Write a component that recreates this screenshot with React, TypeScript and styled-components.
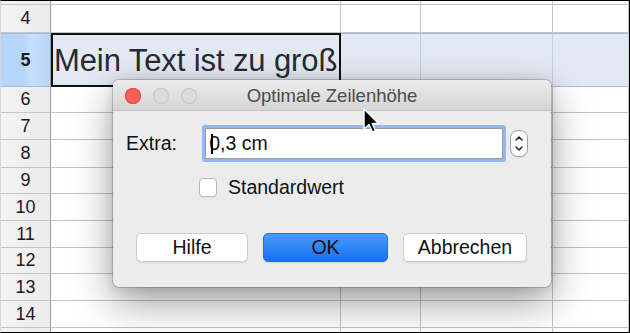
import React from 'react';
import styled, { createGlobalStyle, css } from 'styled-components';

const Global = createGlobalStyle`
  html, body { margin: 0; padding: 0; background: #fff; }
  body { font-family: "Liberation Sans", Arial, Helvetica, sans-serif; }
  * { box-sizing: border-box; }
`;

const Frame = styled.div`
  position: relative;
  width: 630px;
  height: 333px;
  overflow: hidden;
  border-top: 1px solid #000;
  border-right: 1px solid #000;
  border-bottom: 1px solid #000;
  border-left: 1px solid #d6d6d6;
  background: #fff;
`;

const Sheet = styled.div`
  display: flex;
  flex-direction: column;
`;

const Row = styled.div<{ $h: number; $sel?: boolean }>`
  display: grid;
  grid-template-columns: 50px 290px 80px 132px 1fr;
  height: ${(p) => p.$h}px;
  flex: none;
  ${(p) =>
    p.$sel &&
    css`
      background: #e3e9f2;
    `}
`;

const HeaderCell = styled.div<{ $sel?: boolean }>`
  display: flex;
  align-items: center;
  justify-content: center;
  font-size: 18px;
  color: #1a1a1a;
  background: linear-gradient(to right, #f3f3f3, #ececec);
  border-right: 1px solid #9d9d9d;
  border-bottom: 1px solid #c4c4c4;
  ${(p) =>
    p.$sel &&
    css`
      font-weight: bold;
      background: linear-gradient(to right, #b6d5fb 0%, #b6d5fb 45%, #c6defc 60%, #b9d7fb 100%);
      border-top: 1px solid #9fc0ea;
      border-bottom: 1px solid #9fc0ea;
    `}
`;

const Cell = styled.div<{ $sel?: boolean; $active?: boolean }>`
  border-right: 1px solid #c4c4c4;
  border-bottom: 1px solid #c4c4c4;
  display: flex;
  align-items: center;
  overflow: visible;
  white-space: nowrap;
  ${(p) =>
    p.$sel &&
    css`
      border-top: 1px solid #a3bde3;
      border-bottom: 1px solid #a3bde3;
      border-right-color: #c8d0db;
    `}
  ${(p) =>
    p.$active &&
    css`
      border: 2px solid #111;
      border-right-width: 2px;
      padding-left: 1px;
    `}
`;

const BigText = styled.span`
  font-size: 31px;
  color: #262b31;
  letter-spacing: -0.1px;
  margin-top: 2px;
`;

const Dialog = styled.div`
  position: absolute;
  left: 112px;
  top: 79px;
  width: 438px;
  height: 207px;
  border-radius: 6px;
  background: #ececec;
  box-shadow: 0 16px 40px rgba(0, 0, 0, 0.38), 0 0 12px rgba(0, 0, 0, 0.14), 0 0 0 1px rgba(0, 0, 0, 0.16);
  display: flex;
  flex-direction: column;
  overflow: hidden;
`;

const TitleBar = styled.div`
  position: relative;
  height: 31px;
  flex: none;
  display: flex;
  align-items: center;
  justify-content: center;
  background: linear-gradient(#ececec, #d4d4d4);
  border-bottom: 1px solid #c2c2c2;
`;

const Lights = styled.div`
  position: absolute;
  left: 12px;
  top: 8px;
  display: flex;
  gap: 12px;
`;

const Light = styled.span<{ $c: string; $b: string }>`
  width: 16px;
  height: 16px;
  border-radius: 50%;
  background: ${(p) => p.$c};
  box-shadow: inset 0 0 0 1px ${(p) => p.$b};
`;

const Title = styled.span`
  font-size: 18.5px;
  color: #4b4b4b;
  margin-top: 1px;
`;

const Body = styled.div`
  display: flex;
  flex-direction: column;
  padding: 14px 23px 0 13px;
`;

const FormRow = styled.div`
  display: flex;
  align-items: center;
  height: 37px;
`;

const Label = styled.span`
  width: 77px;
  font-size: 19.5px;
  color: #111;
`;

const Field = styled.div`
  position: relative;
  width: 301px;
  height: 31px;
  margin: 0 3px;
  background: #fff;
  border: 1px solid #9a9a9a;
  box-shadow: 0 0 0 3px #93b9ec;
  border-radius: 1px;
  display: flex;
  align-items: center;
  padding-left: 3px;
  font-size: 19.5px;
  color: #111;
`;

const Caret = styled.span`
  position: absolute;
  left: 5px;
  top: 5px;
  width: 2px;
  height: 20px;
  background: #000;
`;

const Stepper = styled.div`
  margin-left: 4px;
  width: 18px;
  height: 27px;
  border-radius: 8px;
  border: 1px solid #a2a2a2;
  background: #fff;
  box-shadow: 0 1px 1px rgba(0, 0, 0, 0.08);
  display: flex;
  align-items: center;
  justify-content: center;
`;

const CheckRow = styled.div`
  display: flex;
  align-items: center;
  margin-top: 16px;
  padding-left: 73px;
  height: 19px;
`;

const Box = styled.span`
  width: 18px;
  height: 19px;
  border-radius: 4px;
  background: #fff;
  border: 1px solid #b8b8b8;
  box-shadow: 0 1px 1px rgba(0, 0, 0, 0.06);
`;

const CheckLabel = styled.span`
  margin-left: 11px;
  font-size: 19.5px;
  color: #111;
`;

const Buttons = styled.div`
  display: flex;
  margin-top: 36px;
  padding-left: 10px;
  gap: 15px;
`;

const Button = styled.div<{ $w: number; $primary?: boolean }>`
  width: ${(p) => p.$w}px;
  height: 29px;
  border-radius: 5px;
  display: flex;
  align-items: center;
  justify-content: center;
  font-size: 19.5px;
  color: #111;
  background: #fff;
  border: 1px solid #cdcdcd;
  box-shadow: 0 1px 1px rgba(0, 0, 0, 0.1);
  ${(p) =>
    p.$primary &&
    css`
      background: linear-gradient(#4a9bfb, #1670f4);
      border: 1px solid #1f6fe0;
    `}
`;

const Pointer = styled.svg`
  position: absolute;
  left: 361px;
  top: 106px;
`;

const rowHeights = [26, 27, 28, 26, 27, 27, 26, 27, 27];

export default function App() {
  const rows: { n: string; h: number }[] = [
    { n: '', h: 4 },
    { n: '4', h: 28 },
  ];
  rowHeights.forEach((h, i) => rows.push({ n: String(6 + i), h }));

  return (
    <>
      <Global />
      <Frame>
        <Sheet>
          {rows.slice(0, 2).map((r) => (
            <Row key={'r' + r.n} $h={r.h}>
              <HeaderCell>{r.n}</HeaderCell>
              <Cell />
              <Cell />
              <Cell />
              <Cell />
            </Row>
          ))}
          <Row $h={54} $sel>
            <HeaderCell $sel>5</HeaderCell>
            <Cell $active>
              <BigText>Mein Text ist zu groß</BigText>
            </Cell>
            <Cell $sel />
            <Cell $sel />
            <Cell $sel />
          </Row>
          {rows.slice(2).map((r) => (
            <Row key={'r' + r.n} $h={r.h}>
              <HeaderCell>{r.n}</HeaderCell>
              <Cell />
              <Cell />
              <Cell />
              <Cell />
            </Row>
          ))}
          <Row $h={10}>
            <HeaderCell />
            <Cell />
            <Cell />
            <Cell />
            <Cell />
          </Row>
        </Sheet>

        <Dialog>
          <TitleBar>
            <Lights>
              <Light $c="#fd5f57" $b="#e2463f" />
              <Light $c="#dcdcdc" $b="#c6c6c6" />
              <Light $c="#dcdcdc" $b="#c6c6c6" />
            </Lights>
            <Title>Optimale Zeilenhöhe</Title>
          </TitleBar>
          <Body>
            <FormRow>
              <Label>Extra:</Label>
              <Field>
                <Caret />
                0,3 cm
              </Field>
              <Stepper>
                <svg width="10" height="19" viewBox="0 0 10 19">
                  <path d="M2 6 L5 3 L8 6" fill="none" stroke="#222" strokeWidth="1.5" strokeLinecap="round" strokeLinejoin="round" />
                  <path d="M2 13 L5 16 L8 13" fill="none" stroke="#222" strokeWidth="1.5" strokeLinecap="round" strokeLinejoin="round" />
                </svg>
              </Stepper>
            </FormRow>
            <CheckRow>
              <Box />
              <CheckLabel>Standardwert</CheckLabel>
            </CheckRow>
            <Buttons>
              <Button $w={112}>Hilfe</Button>
              <Button $w={125} $primary>
                OK
              </Button>
              <Button $w={124}>Abbrechen</Button>
            </Buttons>
          </Body>
        </Dialog>

        <Pointer width="20" height="28" viewBox="0 0 20 28">
          <path
            d="M2 2 L2 22 L7 17.5 L10.5 25 L13.5 23.7 L10.2 16.5 L16.5 16.5 Z"
            fill="#000"
            stroke="#fff"
            strokeWidth="1.4"
            strokeLinejoin="round"
          />
        </Pointer>
      </Frame>
    </>
  );
}
